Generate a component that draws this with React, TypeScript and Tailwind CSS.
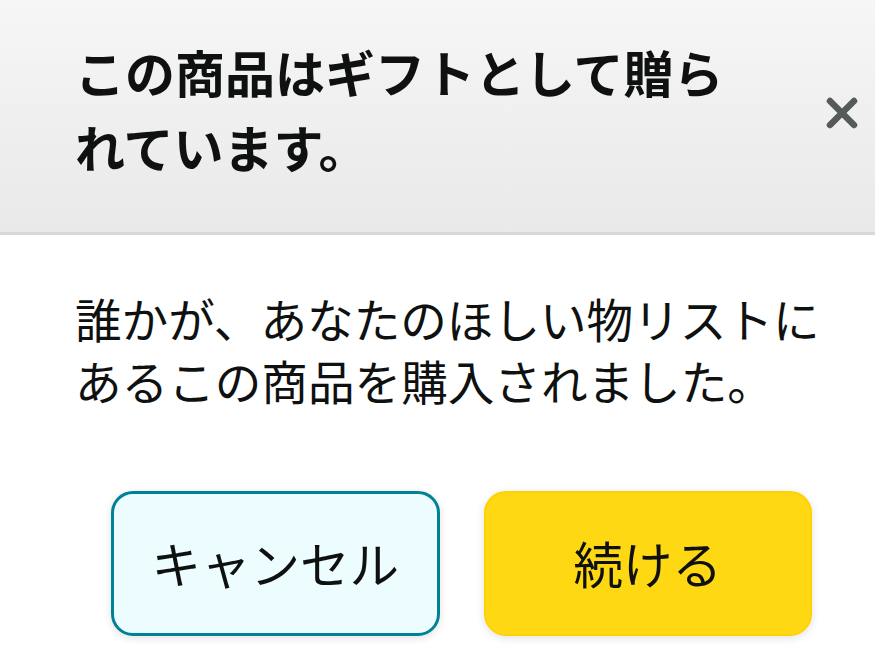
export default function App() {
  return (
    <div
      className="w-[875px] h-[671px] bg-white text-[#0f1111] overflow-hidden"
      style={{ fontFamily: '"Noto Sans CJK JP", "Noto Sans", sans-serif' }}
    >
      {/* Header */}
      <div className="relative h-[235px] bg-gradient-to-b from-[#f6f6f6] to-[#e9e9e9] border-b-[3px] border-[#d5d9d9] pl-[75px] pt-[34px]">
        <h1 className="w-[680px] text-[50px] leading-[75px] font-bold">
          この商品はギフトとして贈られています。
        </h1>
        <button aria-label="閉じる" className="absolute left-[822px] top-[93px] w-[40px] h-[40px] flex items-center justify-center">
          <svg width="34" height="34" viewBox="0 0 34 34">
            <path d="M5 5 L29 29 M29 5 L5 29" stroke="#555a5a" strokeWidth="6.5" strokeLinecap="round" />
          </svg>
        </button>
      </div>

      {/* Body */}
      <div className="pl-[75px] pr-[40px] pt-[52px]">
        <p className="text-[46.6px] leading-[62px]">
          誰かが、あなたのほしい物リストにあるこの商品を購入されました。
        </p>
      </div>

      {/* Actions */}
      <div className="flex gap-[44px] pl-[111px] pr-[63px] mt-[80px]">
        <button className="w-[329px] h-[145px] rounded-[22px] border-[3px] border-[#008296] bg-[#edfdff] text-[49.5px] shadow-[0_2px_8px_rgba(15,17,17,0.12)]">
          キャンセル
        </button>
        <button className="w-[329px] h-[145px] rounded-[22px] border-2 border-[#fcd200] bg-[#ffd814] text-[49.5px] shadow-[0_2px_8px_rgba(15,17,17,0.12)]">
          続ける
        </button>
      </div>
    </div>
  );
}
